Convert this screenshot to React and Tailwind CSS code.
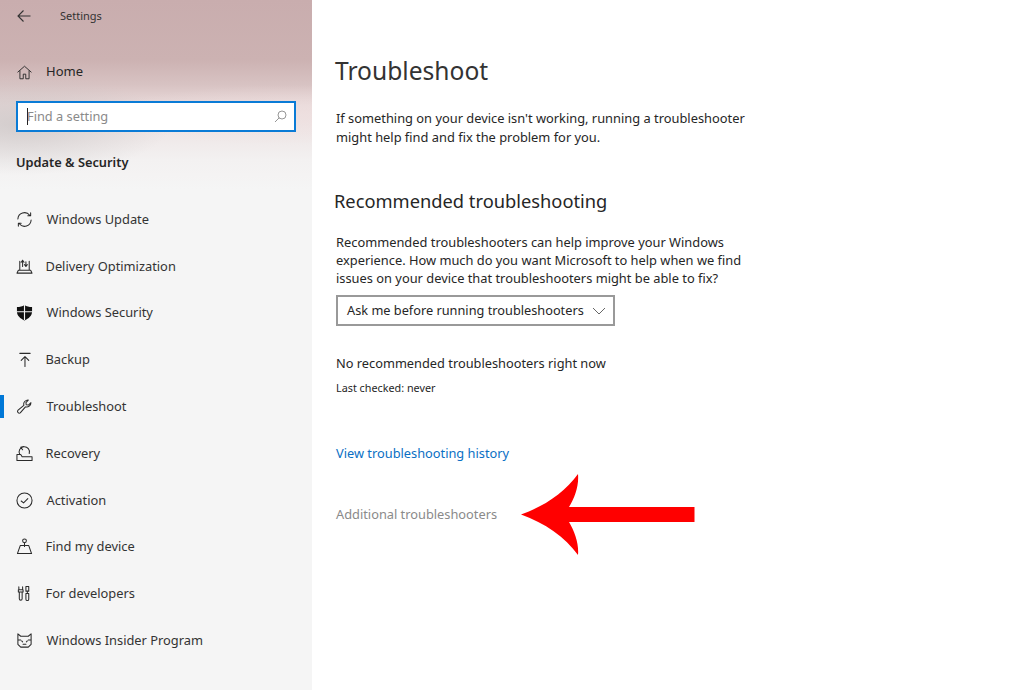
const S = { fill: "none", stroke: "#2a2a2a", strokeWidth: 1.1, strokeLinecap: "round", strokeLinejoin: "round" };
const Ic = ({ children, w = 17 }) => <svg width={w} height={w} viewBox="0 0 18 18" {...S}>{children}</svg>;

const items = [
  ["Windows Update", "w-[30.5px]", <Ic><path d="M2 8.500A7 7 0 0 1 14.500 4.500M15.500 2v3h-3M16 9.500A7 7 0 0 1 3.500 13.500M2.500 16v-3h3" /></Ic>],
  ["Delivery Optimization", "w-[29.5px]", <Ic><path d="M4 3.500v9.500M14 3.500v9.500M1 16h16l-1.500-3h-13zM7 9V2.500M10.500 9V4M5.500 4.500L7 2.500l1.500 2M9 7l1.500 2L12 7" /></Ic>],
  ["Windows Security", "w-[30.5px]", <svg width="17" height="17" viewBox="0 0 18 18"><path d="M9 1c2 1.500 5 2.200 8 2.200V8c0 4.500-3.500 7.500-8 9.500C4.500 15.500 1 12.500 1 8V3.200C4 3.200 7 2.500 9 1z" fill="#111" /><path d="M9 1v16M1 8.200h16" stroke="#f3f3f3" strokeWidth="1.200" /></svg>],
  ["Backup", "w-[29.5px]", <Ic><path d="M4 2.500h11M9.500 16.500V6M5.500 10l4-4 4 4" /></Ic>],
  ["Troubleshoot", "w-[30.5px]", <Ic><path d="M11 2.500a4.500 4.500 0 0 1 2-.3l-2.500 2.600.3 2.400 2.400.3 2.600-2.500a4.500 4.500 0 0 1-5.800 4.400L4.500 15.800a1.900 1.900 0 0 1-2.600-2.600l6.400-5.500A4.500 4.500 0 0 1 11 2.500z" /></Ic>],
  ["Recovery", "w-[29.5px]", <Ic><path d="M1 16.500h16v-4H6.500L5 10H1zM4 10A5.500 5.500 0 1 1 14 9M5 2.500L8 1.500M5 2.500l2 2.500" /></Ic>],
  ["Activation", "w-[30.5px]", <Ic><circle cx="9" cy="9" r="8" /><path d="M5.500 9.500l2.500 2 4.500-4.500" /></Ic>],
  ["Find my device", "w-[29.5px]", <Ic><circle cx="9" cy="3" r="2" /><path d="M9 5v4M4.500 8h9l3 8.500H1.500z" /></Ic>],
  ["For developers", "w-[29.5px]", <Ic><path d="M3 2v3M7 2v3M2.500 5h5v2.500h-5zM3.500 7.500v7a1.500 1.500 0 0 0 3 0v-7M10.500 1.500h3v5h-3zM10.500 9h3v6a1.500 1.500 0 0 1-3 0zM12 6.500V9" /></Ic>],
  ["Windows Insider Program", "w-[30.5px]", <Ic><path d="M2 2l3 2.500h8L16 2v11l-3 3H5l-3-3zM2 8.500h3M13 8.500h3M6 9.500l1 1M12 9.500l-1 1M7.500 13h3" /></Ic>],
];

export default function App() {
  return (
    <div className="relative flex h-[690px] w-[1024px] overflow-hidden bg-white font-['Noto_Sans',sans-serif] text-[#262626]">
      <aside className="flex h-full w-[312px] shrink-0 flex-col bg-[radial-gradient(ellipse_150px_50px_at_20px_125px,rgba(200,195,195,0.7),transparent),radial-gradient(ellipse_200px_30px_at_300px_115px,rgba(240,224,224,0.6),transparent),linear-gradient(180deg,#c9adae_0px,#ccb2b2_60px,#d8c3c3_85px,#e8d9d9_105px,#eee6e6_130px,#f3f1f1_160px,#f5f5f5_190px,#f5f5f5_100%)]">
        <div className="flex h-[32px] items-center pl-[17px]">
          <svg width="14" height="14" viewBox="0 0 14 14" fill="none" stroke="#333" strokeWidth="1.100"><path d="M13.500 7H1M6.500 1.500L1 7l5.500 5.500" /></svg>
          <span className="ml-[29px] text-[11px] text-[#333]">Settings</span>
        </div>
        <div className="mt-[24px] flex h-[32px] items-center pl-[17px]">
          <Ic w={15}><path d="M1 8.500L9 1.500l8 7M3.500 7v9.500h4V11h3v5.500h4V7" /></Ic>
          <span className="ml-[14px] text-[13px]">Home</span>
        </div>
        <div className="ml-[16px] mt-[13px] flex h-[31px] w-[280px] items-center border-2 border-[#0a7bd6] bg-white pl-[9px] pr-[7px]">
          <span className="h-[17px] w-px bg-[#222]" />
          <span className="-ml-px flex-1 text-[12.800px] text-[#8a8a8a]">Find a setting</span>
          <svg width="13" height="13" viewBox="0 0 13 13" fill="none" stroke="#8a8a8a" strokeWidth="0.900"><circle cx="8" cy="5" r="4" /><path d="M5.200 7.800L1 12" /></svg>
        </div>
        <h2 className="ml-[16px] mt-[20px] text-[12.800px] leading-[20px] font-semibold">Update &amp; Security</h2>
        <nav className="relative mt-[24px] flex flex-col">
          {items.map(([t, w, icon]) => (
            <div key={t} className="relative flex h-[46.800px] items-center pl-[16px]">
              {t === "Troubleshoot" && <span className="absolute left-0 top-[12px] h-[23px] w-[4px] bg-[#0078d7]" />}
              <span className={"flex shrink-0 items-center " + w}>{icon}</span>
              <span className="text-[12.850px] text-[#333]">{t}</span>
            </div>
          ))}
        </nav>
      </aside>
      <main className="flex flex-col pl-[24px] pt-[49px]">
        <h1 className="-ml-px text-[24.600px] leading-[44px] font-normal text-[#333]">Troubleshoot</h1>
        <p className="mt-[16px] w-[420px] text-[12.850px] leading-[19px]">If something on your device isn't working, running a troubleshooter might help find and fix the problem for you.</p>
        <h2 className="-ml-[2px] mt-[40px] text-[18.300px] leading-[28px] font-normal">Recommended troubleshooting</h2>
        <p className="mt-[18px] w-[420px] text-[12.850px] leading-[18px]">Recommended troubleshooters can help improve your Windows experience. How much do you want Microsoft to help when we find issues on your device that troubleshooters might be able to fix?</p>
        <div className="mt-[8px] flex h-[31px] w-[279px] items-center justify-between border-2 border-[#999] bg-white pl-[9px] pr-[7px] text-[12.750px]">
          <span>Ask me before running troubleshooters</span>
          <svg width="14" height="8" viewBox="0 0 14 8" fill="none" stroke="#666"><path d="M1 1l6 6 6-6" /></svg>
        </div>
        <p className="mt-[27.500px] text-[12.800px] leading-[19px]">No recommended troubleshooters right now</p>
        <p className="mt-[7px] text-[10.800px] leading-[16px]">Last checked: never</p>
        <a className="mt-[47.500px] text-[12.800px] leading-[20px] text-[#0a6fc4]">View troubleshooting history</a>
        <span className="mt-[41px] text-[12.800px] leading-[20px] text-[#8a8a8a]">Additional troubleshooters</span>
      </main>
      <svg className="absolute left-[515px] top-[470px]" width="185" height="90" viewBox="515 470 185 90">
        <path d="M521 514.500C545 506 565 492 578 474C579 486 575 497 569 507H694.500V522H569C575 532 579 544 578 555C565 537 545 523 521 514.500Z" fill="#ff0000" />
      </svg>
    </div>
  );
}
